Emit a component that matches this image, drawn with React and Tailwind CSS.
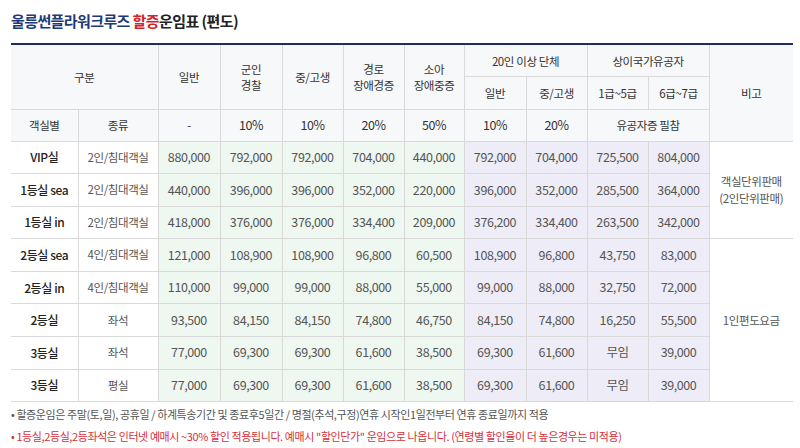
const rows = [
  ["VIP실", "2인/침대객실", "880,000", "792,000", "792,000", "704,000", "440,000", "792,000", "704,000", "725,500", "804,000"],
  ["1등실 sea", "2인/침대객실", "440,000", "396,000", "396,000", "352,000", "220,000", "396,000", "352,000", "285,500", "364,000"],
  ["1등실 in", "2인/침대객실", "418,000", "376,000", "376,000", "334,400", "209,000", "376,200", "334,400", "263,500", "342,000"],
  ["2등실 sea", "4인/침대객실", "121,000", "108,900", "108,900", "96,800", "60,500", "108,900", "96,800", "43,750", "83,000"],
  ["2등실 in", "4인/침대객실", "110,000", "99,000", "99,000", "88,000", "55,000", "99,000", "88,000", "32,750", "72,000"],
  ["2등실", "좌석", "93,500", "84,150", "84,150", "74,800", "46,750", "84,150", "74,800", "16,250", "55,500"],
  ["3등실", "좌석", "77,000", "69,300", "69,300", "61,600", "38,500", "69,300", "61,600", "무임", "39,000"],
  ["3등실", "평실", "77,000", "69,300", "69,300", "61,600", "38,500", "69,300", "61,600", "무임", "39,000"],
];

const th = "border border-[#d9d9d9] bg-[#f7f8fa] font-normal text-[#333] leading-[16px]";
const td = "border border-[#d9d9d9] text-[#555] text-[12.5px]";

export default function App() {
  return (
    <div className="w-[800px] h-[448px] bg-white overflow-hidden px-[11px] pt-[9px] font-['Noto_Sans_CJK_KR',sans-serif]">
      <h1 className="text-[15px] font-bold text-[#1d3a78] leading-[24px] tracking-[-0.6px]">
        울릉썬플라워크루즈 <span className="text-[#d3242b]">할증</span>
        <span className="text-[#222]">운임표 (편도)</span>
      </h1>

      <table className="mt-[10px] w-[782px] table-fixed border-collapse border-t-2 border-t-[#1b2d6b] text-center text-[11.5px] tracking-[-0.4px]">
        <colgroup>
          <col className="w-[67px]" />
          <col className="w-[80px]" />
          <col className="w-[62px]" />
          <col className="w-[62px]" />
          <col className="w-[61px]" />
          <col className="w-[61px]" />
          <col className="w-[60px]" />
          <col className="w-[62px]" />
          <col className="w-[61px]" />
          <col className="w-[61px]" />
          <col className="w-[61px]" />
          <col className="w-[84px]" />
        </colgroup>
        <thead>
          <tr className="h-[32.5px]">
            <th colSpan={2} rowSpan={2} className={`${th} border-l-0`}>구분</th>
            <th rowSpan={2} className={th}>일반</th>
            <th rowSpan={2} className={th}>군인<br />경찰</th>
            <th rowSpan={2} className={th}>중/고생</th>
            <th rowSpan={2} className={th}>경로<br />장애경증</th>
            <th rowSpan={2} className={th}>소아<br />장애중증</th>
            <th colSpan={2} className={th}>20인 이상 단체</th>
            <th colSpan={2} className={th}>상이국가유공자</th>
            <th rowSpan={3} className={`${th} border-r-0`}>비고</th>
          </tr>
          <tr className="h-[32.5px]">
            <th className={th}>일반</th>
            <th className={th}>중/고생</th>
            <th className={th}>1급~5급</th>
            <th className={th}>6급~7급</th>
          </tr>
          <tr className="h-[32px]">
            <th className={`${th} border-l-0`}>객실별</th>
            <th className={th}>종류</th>
            <th className={th}>-</th>
            <th className={`${th} text-[12.5px]`}>10%</th>
            <th className={`${th} text-[12.5px]`}>10%</th>
            <th className={`${th} text-[12.5px]`}>20%</th>
            <th className={`${th} text-[12.5px]`}>50%</th>
            <th className={`${th} text-[12.5px]`}>10%</th>
            <th className={`${th} text-[12.5px]`}>20%</th>
            <th colSpan={2} className={th}>유공자증 필참</th>
          </tr>
        </thead>
        <tbody>
          {rows.map((r, i) => (
            <tr key={i} className="h-[32.6px]">
              <td className="border border-[#d9d9d9] border-l-0 text-[#222] text-[12px] font-medium">{r[0]}</td>
              <td className="border border-[#d9d9d9] text-[#555]">{r[1]}</td>
              {r.slice(2, 7).map((v, j) => (
                <td key={j} className={`${td} bg-[#eef7f0]`}>{v}</td>
              ))}
              {r.slice(7).map((v, j) => (
                <td key={j} className={`${td} bg-[#eeedf7]`}>{v}</td>
              ))}
              {i === 0 && (
                <td rowSpan={3} className="border border-[#d9d9d9] border-r-0 text-[#555] leading-[17px]">
                  객실단위판매<br />(2인단위판매)
                </td>
              )}
              {i === 3 && (
                <td rowSpan={5} className="border border-[#d9d9d9] border-r-0 text-[#555]">1인편도요금</td>
              )}
            </tr>
          ))}
        </tbody>
      </table>

      <ul className="mt-[1px] text-[11px] leading-[22px] tracking-[-0.4px]">
        <li className="text-[#555]">• 할증운임은 주말(토,일), 공휴일 / 하계특송기간 및 종료후5일간 / 명절(추석,구정)연휴 시작인1일전부터 연휴 종료일까지 적용</li>
        <li className="text-[#d6303a]">• 1등실,2등실,2등좌석은 인터넷 예매시 ~30% 할인 적용됩니다. 예매시 "할인단가" 운임으로 나옵니다. (연령별 할인율이 더 높은경우는 미적용)</li>
      </ul>
    </div>
  );
}
